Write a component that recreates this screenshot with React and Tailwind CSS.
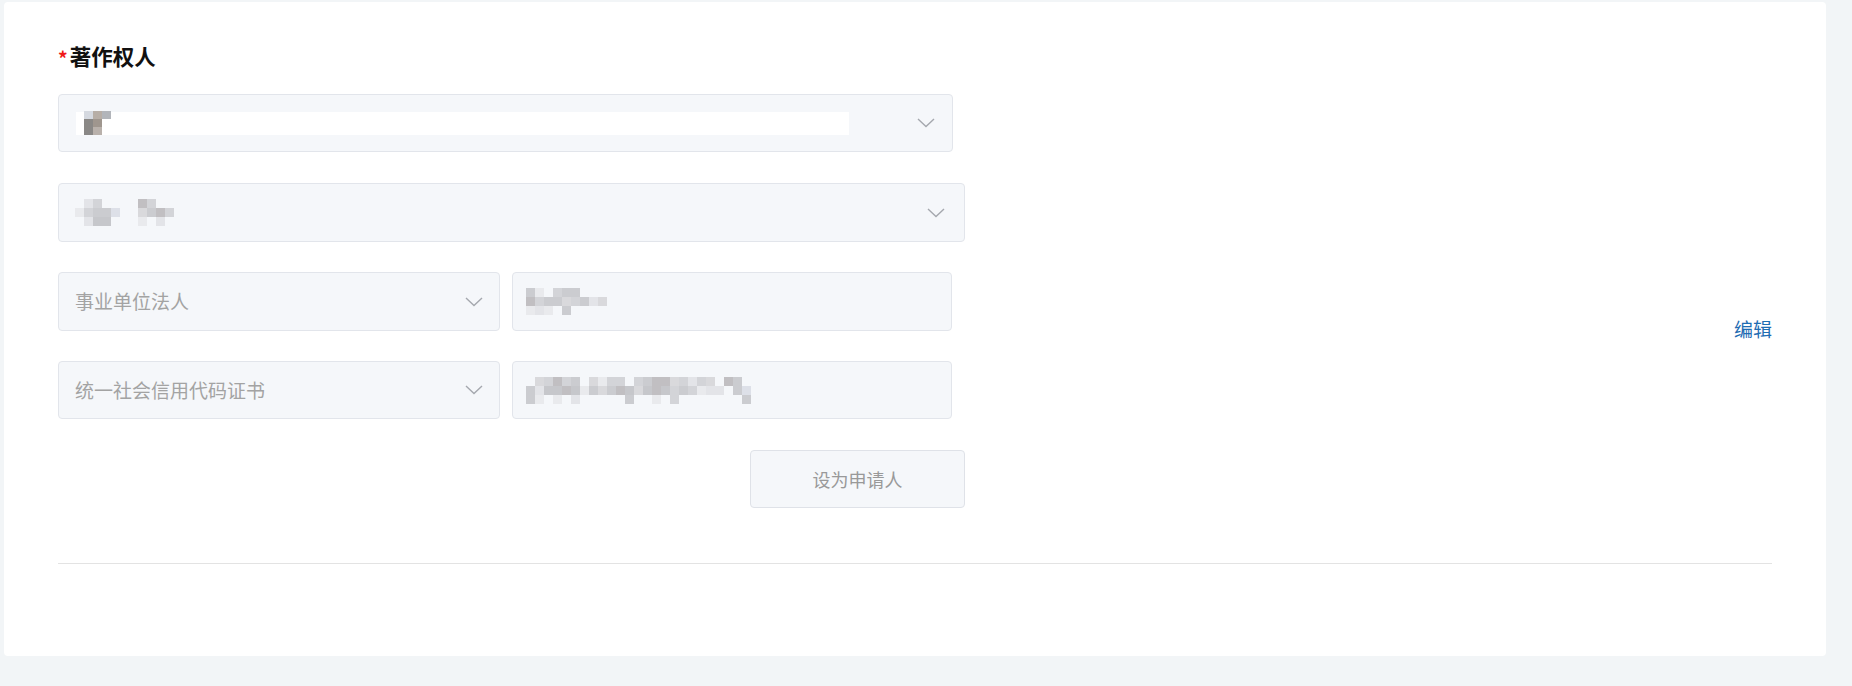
import React from "react";

const PALETTE = {
  a: "#e3e4e8",
  b: "#d3d4d8",
  c: "#e9eaed",
  d: "#cbccd0",
  e: "#dde0e8",
  f: "#c6c7cb",
  g: "#d9d9dc",
  h: "#c1bfc2",
  D: "#8a8886",
  E: "#9f968e",
  B: "#b7aea6",
  C: "#b2b5ba",
  L: "#d5d9e0",
  F: "#b9b1ab",
};

function Mosaic({ rows, cell = 9, cellH = 9 }) {
  const w = rows[0].length * cell;
  const h = rows.length * cellH;
  return (
    <svg width={w} height={h} viewBox={`0 0 ${w} ${h}`} className="block shrink-0">
      {rows.map((r, y) =>
        r.split("").map((ch, x) =>
          ch === "." ? null : (
            <rect key={`${x}-${y}`} x={x * cell} y={y * cellH} width={cell} height={cellH} fill={PALETTE[ch]} />
          )
        )
      )}
    </svg>
  );
}

function Chevron() {
  return (
    <svg width="18" height="10" viewBox="0 0 18 10" className="shrink-0">
      <polyline points="1,1 9,8.5 17,1" fill="none" stroke="#a5a8ae" strokeWidth="1.4" />
    </svg>
  );
}

const font = { fontFamily: '"Noto Sans CJK SC", "Noto Sans", sans-serif' };

export default function App() {
  return (
    <div className="w-full h-[686px] bg-[#f2f5f7] pt-[2px] pl-[4px]" style={font}>
      <div className="w-[1822px] h-[654px] bg-white rounded-[4px] pl-[54px] pt-[40px]">
        <div className="flex items-center h-[28px]">
          <span className="text-[#f01818] text-[19px] font-bold leading-none mr-[2px] mt-[2px]">*</span>
          <span className="text-[21.5px] font-bold text-[#111]">著作权人</span>
        </div>

        <div className="w-[1714px] flex items-start justify-between mt-[24px]">
          <div className="w-[907px] flex flex-col">
            {/* select 1 */}
            <div className="w-[895px] h-[58px] bg-[#f5f7fa] border border-[#e2e5eb] rounded-[4px] flex items-center justify-between pl-[17px] pr-[17px]">
              <div className="h-[23px] w-[773px] bg-white flex items-center pl-[8px]">
                <Mosaic rows={["LBC", "DE.", "DF."]} cell={9} cellH={8} />
              </div>
              <Chevron />
            </div>

            {/* select 2 */}
            <div className="mt-[31px] w-[907px] h-[59px] bg-[#f5f7fa] border border-[#e2e5eb] rounded-[4px] flex items-center justify-between pl-[16px] pr-[19px]">
              <div className="flex items-center gap-[18px]">
                <Mosaic rows={[".ab..", "cbdde", ".aff."]} cell={9} cellH={9} />
                <Mosaic rows={["hb..", "gdhb", "c.a."]} cell={9} cellH={9} />
              </div>
              <Chevron />
            </div>

            {/* row 3 */}
            <div className="mt-[30px] flex gap-[12px]">
              <div className="w-[442px] h-[59px] bg-[#f5f7fa] border border-[#e2e5eb] rounded-[4px] flex items-center justify-between pl-[16px] pr-[16px]">
                <span className="text-[19px] text-[#a3a3a3]">事业单位法人</span>
                <Chevron />
              </div>
              <div className="w-[440px] h-[59px] bg-[#f5f7fa] border border-[#e2e5eb] rounded-[4px] flex items-center pl-[13px]">
                <Mosaic rows={["dc.bdd...", "hbddgbdag", "cac.d...."]} cell={9} cellH={9} />
              </div>
            </div>

            {/* row 4 */}
            <div className="mt-[30px] flex gap-[12px]">
              <div className="w-[442px] h-[58px] bg-[#f5f7fa] border border-[#e2e5eb] rounded-[4px] flex items-center justify-between pl-[16px] pr-[16px]">
                <span className="text-[19px] text-[#a3a3a3]">统一社会信用代码证书</span>
                <Chevron />
              </div>
              <div className="w-[440px] h-[58px] bg-[#f5f7fa] border border-[#e2e5eb] rounded-[4px] flex items-center pl-[13px]">
                <Mosaic
                  rows={[
                    ".gbhbd.gcbb.bdhhgbabg.hd.",
                    "daffhfcdgdhfgfhfbdbcaa.de",
                    "dc.c.a.....d..c.b.......d",
                  ]}
                  cell={9}
                  cellH={9}
                />
              </div>
            </div>

            {/* button */}
            <div className="mt-[31px] flex justify-end">
              <button className="w-[215px] h-[58px] bg-[#f5f7fa] border border-[#dfe2e8] rounded-[4px] text-[18px] text-[#999]">
                设为申请人
              </button>
            </div>
          </div>

          <span className="mt-[222px] text-[19px] text-[#1f6db3] leading-[26px]">编辑</span>
        </div>

        <div className="mt-[55px] w-[1714px] border-t border-[#e3e3e3]" />
      </div>
    </div>
  );
}
